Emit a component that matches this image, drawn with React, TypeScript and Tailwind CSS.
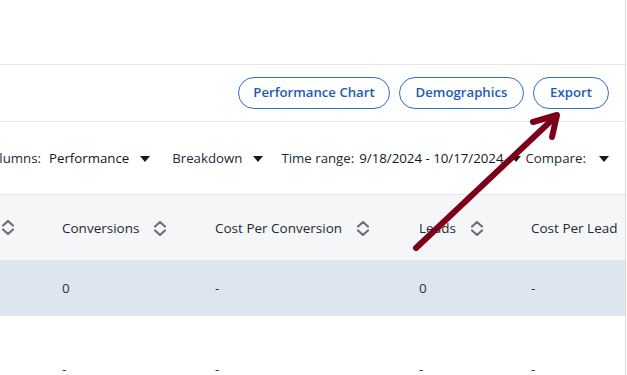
import React from 'react';

function SortIcon() {
    return (
        <svg width="12" height="15" viewBox="0 0 12 15" fill="none" stroke="#6b6f76" strokeWidth="2.2" strokeLinecap="round" strokeLinejoin="round">
            <path d="M1 5.5 6 1l5 4.5" />
            <path d="M1 9.5 6 14l5-4.5" />
        </svg>
    );
}

function Caret() {
    return (
        <svg width="10" height="6" viewBox="0 0 10 6">
            <path d="M0 0h10L5 6z" fill="#1a1a1a" />
        </svg>
    );
}

const cols = [
    { label: 'Conversions', w: 'w-[153px]', sort: true },
    { label: 'Cost Per Conversion', w: 'w-[204px]', sort: true },
    { label: 'Leads', w: 'w-[112px]', sort: true },
    { label: 'Cost Per Lead', w: 'w-[94px]', sort: false },
];

export default function App() {
    return (
        <div className="relative w-[627px] h-[375px] overflow-hidden bg-white font-['Open_Sans','Noto_Sans',sans-serif] text-[13px] text-[#222b36]">
            <div className="w-[626px] h-full border-r border-[#dadada] overflow-hidden">
                <div className="h-[65px] border-b border-[#e6e7e9]" />

                <div className="h-[57px] flex items-center justify-end gap-[9px] pr-[16px] border-b border-[#e6e7e9]">
                    <button className="h-[32px] w-[152px] rounded-full border border-[#2d6fd2] text-[#1d5ab5] font-semibold text-[13.2px]">
                        Performance Chart
                    </button>
                    <button className="h-[32px] w-[125px] rounded-full border border-[#2d6fd2] text-[#1d5ab5] font-semibold text-[13.2px]">
                        Demographics
                    </button>
                    <button className="h-[32px] w-[76px] rounded-full border border-[#2d6fd2] text-[#1d5ab5] font-semibold text-[13.2px]">
                        Export
                    </button>
                </div>

                <div className="h-[73px] flex items-center pt-[2px] border-b border-[#e6e7e9] whitespace-nowrap text-[13.25px]">
                    <div className="flex items-center ml-[-17px]">
                        <span>Columns:</span>
                        <span className="ml-[8px] font-medium text-[#111827]">Performance</span>
                        <span className="ml-[11px]"><Caret /></span>
                    </div>
                    <div className="flex items-center ml-[22px]">
                        <span>Breakdown</span>
                        <span className="ml-[11px]"><Caret /></span>
                    </div>
                    <div className="flex items-center ml-[18px]">
                        <span>Time range:</span>
                        <span className="ml-[5px] font-medium text-[#111827]">9/18/2024 - 10/17/2024</span>
                        <span className="ml-[8px]"><Caret /></span>
                    </div>
                    <div className="flex items-center ml-[4px]">
                        <span>Compare:</span>
                        <span className="ml-[13px]"><Caret /></span>
                    </div>
                </div>

                <div className="h-[65px] flex items-center bg-[#f5f6f8] font-medium text-[#1f2732] text-[13.5px]">
                    <div className="w-[62px] pl-[2px] flex items-center"><SortIcon /></div>
                    {cols.map((c) => (
                        <div key={c.label} className={`${c.w} shrink-0 flex items-center whitespace-nowrap pt-[1px]`}>
                            <span>{c.label}</span>
                            {c.sort && <span className="ml-[15px] flex"><SortIcon /></span>}
                        </div>
                    ))}
                </div>

                <div className="h-[56px] flex items-center bg-[#dde6f0] text-[#2a3340] text-[13.5px]">
                    <div className="w-[62px]" />
                    <div className="w-[153px] shrink-0">0</div>
                    <div className="w-[204px] shrink-0">-</div>
                    <div className="w-[112px] shrink-0">0</div>
                    <div className="w-[94px] shrink-0">-</div>
                </div>

                <div className="flex pt-[43px] text-[#2a3340] text-[13.5px]">
                    <div className="w-[62px]" />
                    <div className="w-[153px] shrink-0">-</div>
                    <div className="w-[204px] shrink-0">-</div>
                    <div className="w-[112px] shrink-0">-</div>
                    <div className="w-[94px] shrink-0">-</div>
                </div>
            </div>

            <svg className="absolute left-0 top-0 pointer-events-none" width="627" height="375" viewBox="0 0 627 375" fill="none" stroke="#7c0019" strokeWidth="6" strokeLinecap="round" strokeLinejoin="round">
                <path d="M416 248 554 118" />
                <path d="M533 122 557 115 552 137" />
            </svg>
        </div>
    );
}
